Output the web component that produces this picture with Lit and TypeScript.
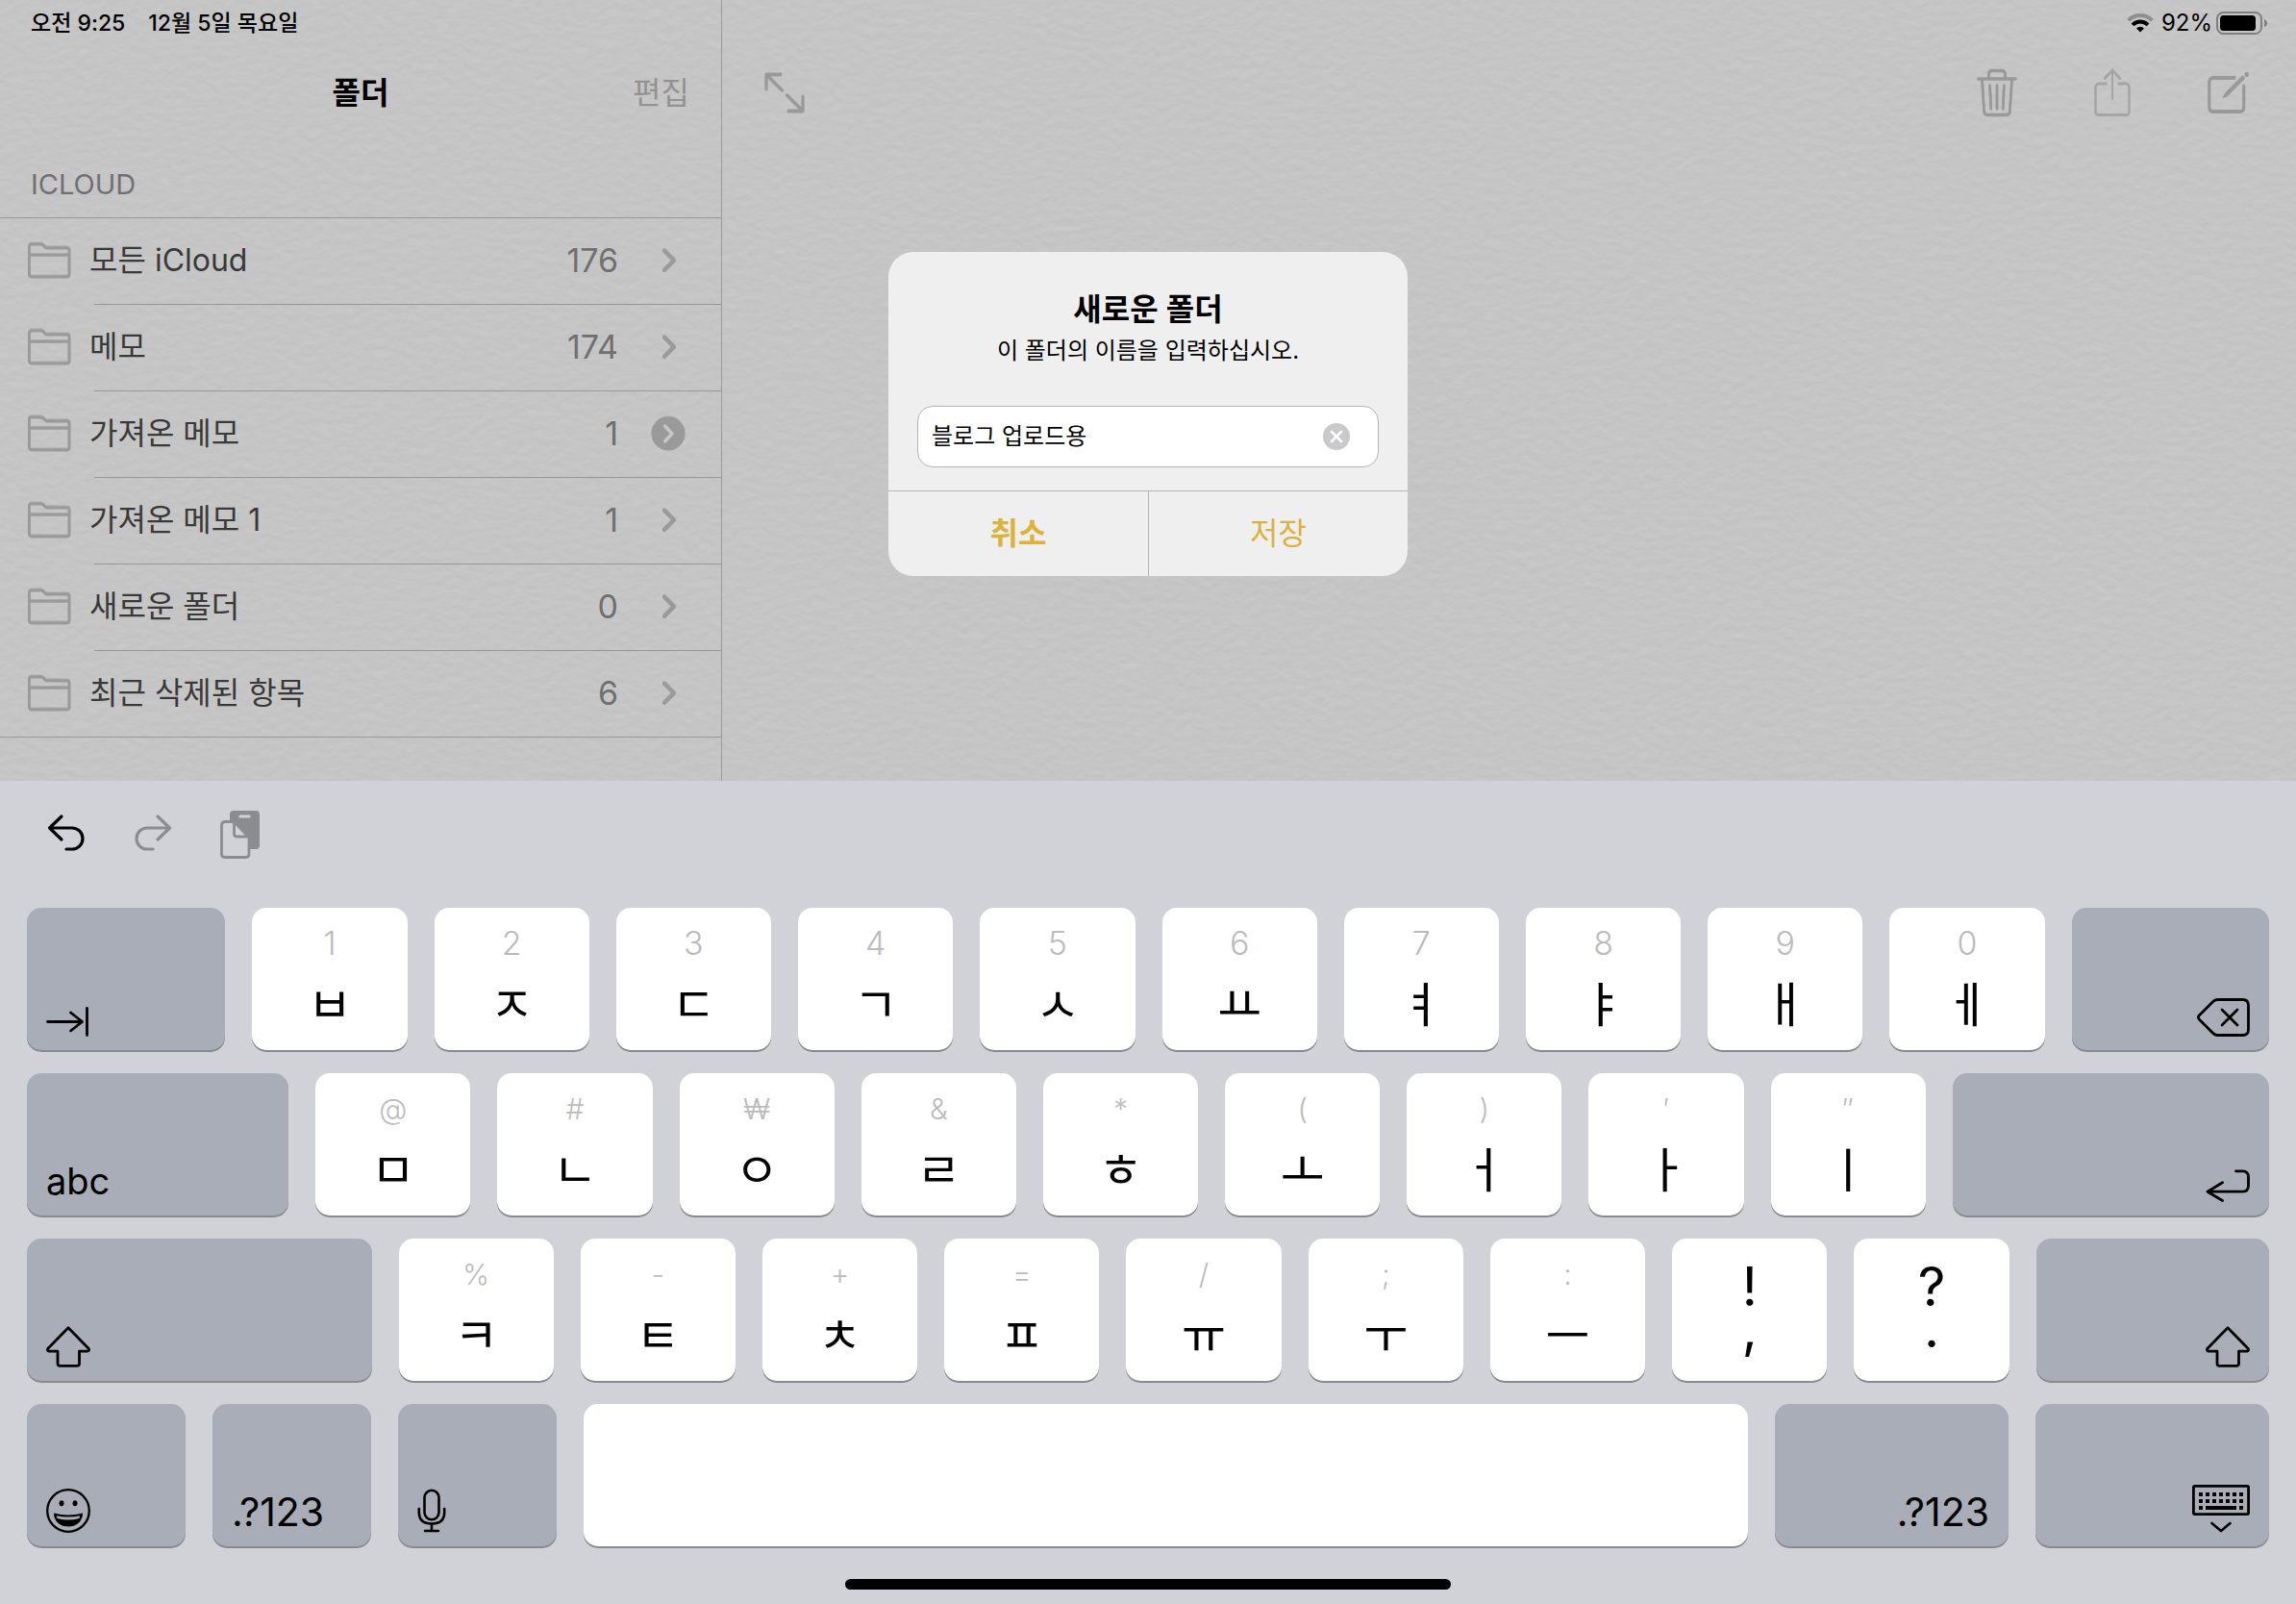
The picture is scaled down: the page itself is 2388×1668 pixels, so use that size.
import { LitElement, html, svg, css, nothing, type TemplateResult } from "lit";
import { customElement, property, state } from "lit/decorators.js";
import { classMap } from "lit/directives/class-map.js";
import { styleMap } from "lit/directives/style-map.js";

const icons: Record<string, TemplateResult> = {
  folder: html`<svg width="46" height="38" viewBox="0 0 46 38" fill="none" stroke="currentColor" stroke-width="2.8" stroke-linejoin="round" aria-hidden="true">
    <path d="M2.4 6V4.6Q2.4 2 5 2H14.5Q16 2 17 3.2L19 5.2Q19.8 6 21.2 6H41.4Q44 6 44 8.6V33.4Q44 36 41.4 36H5Q2.4 36 2.4 33.4Z"/><path d="M3 13.4H44"/></svg>`,
  chevron: html`<svg width="36" height="36" viewBox="0 0 36 36" fill="none" stroke="currentColor" stroke-width="4" stroke-linecap="round" stroke-linejoin="round" aria-hidden="true">
    <path d="M14 8L24 18L14 28"/></svg>`,
  chevronFilled: html`<svg width="36" height="36" viewBox="0 0 36 36" fill="none" aria-hidden="true">
    <circle cx="18" cy="18" r="17.5" fill="currentColor"/><path d="M14.5 10L22 18L14.5 26" stroke="#c6c6c6" stroke-width="3.4" stroke-linecap="round" stroke-linejoin="round"/></svg>`,
  expand: html`<svg width="42" height="42" viewBox="0 0 42 42" fill="none" stroke="currentColor" stroke-width="2.8" stroke-linecap="round" stroke-linejoin="round" aria-hidden="true">
    <path d="M2 17V2H17M2.500 2.500L18.500 18.500M40 25V40H25M39.500 39.500L23.500 23.500"/></svg>`,
  trash: html`<svg width="42" height="50" viewBox="0 0 42 50" fill="none" stroke="currentColor" stroke-width="2.6" stroke-linecap="round" stroke-linejoin="round" aria-hidden="true">
    <path d="M1.500 10.500H40.500M12.500 10V5.500Q12.500 2 16 2H26Q29.500 2 29.500 5.500V10M5.500 11L7.600 44.500Q7.900 48 11.400 48H30.600Q34.100 48 34.400 44.500L36.500 11M13.600 17.500L14.800 41.500M21 17.500V41.500M28.400 17.500L27.200 41.500"/></svg>`,
  share: html`<svg width="38" height="50" viewBox="0 0 38 50" fill="none" stroke="currentColor" stroke-width="2" stroke-linecap="round" stroke-linejoin="round" aria-hidden="true">
    <path d="M12.500 15.500H5Q1.500 15.500 1.500 19V44.500Q1.500 48 5 48H33Q36.500 48 36.500 44.500V19Q36.500 15.500 33 15.500H25.500"/><path d="M19 31V2M11 10L19 1.500L27 10"/></svg>`,
  compose: html`<svg width="44" height="44" viewBox="0 0 44 44" fill="none" aria-hidden="true">
    <path d="M28 6.500H6Q1.800 6.500 1.800 11V37Q1.800 41.500 6 41.500H33.500Q37.800 41.500 37.800 37V15" stroke="currentColor" stroke-width="2.800" stroke-linecap="round"/>
    <path d="M36.400 4.200L39 6.800L20.500 25.200L15.800 27.600L18 22.700Z" fill="currentColor"/><circle cx="40.700" cy="2.900" r="2.200" fill="currentColor"/></svg>`,
  wifi: html`<svg width="28" height="22" viewBox="0 0 28 22" fill="none" stroke-width="4" aria-hidden="true">
    <path d="M1.600 8.200A17.600 17.600 0 0 1 26.400 8.200" stroke="#000" stroke-opacity=".28"/><path d="M6 12.800A11.400 11.400 0 0 1 22 12.800" stroke="#000"/>
    <path d="M14 20.400L10 16.400A5.700 5.700 0 0 1 18 16.400Z" fill="#000"/></svg>`,
  battery: html`<svg width="53" height="24" viewBox="0 0 53 24" aria-hidden="true">
    <rect x="1" y="1" width="46" height="22" rx="6.500" fill="none" stroke="#7f7f7f" stroke-width="2"/><rect x="4" y="4" width="37" height="16" rx="3.500"/><path d="M50 8Q53 9 53 12Q53 15 50 16Z" fill="#7f7f7f"/></svg>`,
  clear: html`<svg width="28" height="28" viewBox="0 0 28 28" aria-hidden="true">
    <circle cx="14" cy="14" r="14" fill="#c9c9cb"/><path d="M9 9L19 19M19 9L9 19" stroke="#fff" stroke-width="2.800" stroke-linecap="round"/></svg>`,
  undo: html`<svg width="40" height="50" viewBox="0 -4 40 50" fill="none" stroke="currentColor" stroke-width="3.200" stroke-linecap="round" stroke-linejoin="round" aria-hidden="true">
    <path d="M15 2L2.500 14L15 26M3 14H26A10.800 10.800 0 0 1 26 36H20"/></svg>`,
  redo: html`<svg width="40" height="50" viewBox="0 -4 40 50" fill="none" stroke="currentColor" stroke-width="3.200" stroke-linecap="round" stroke-linejoin="round" aria-hidden="true">
    <path d="M25 2L37.500 14L25 26M37 14H14A10.800 10.800 0 0 0 14 36H20"/></svg>`,
  paste: html`<svg width="42" height="50" viewBox="0 0 42 50" aria-hidden="true">
    <path d="M10 11.500V4Q10 0 14 0H37Q41 0 41 4V36Q41 40 37 40H31V28L17 13Q15.500 11.500 13 11.500Z" fill="currentColor"/>
    <rect x="19.500" y="4.600" width="12" height="2.800" rx="1" fill="#d1d2d8"/>
    <path d="M15 11.500H5Q1.500 11.500 1.500 15V45Q1.500 48.500 5 48.500H26.500Q30 48.500 30 45V28L14.500 11.500V24Q14.500 27 17 27H30" fill="none" stroke="currentColor" stroke-width="2.800"/></svg>`,
  tab: html`<svg width="44" height="31" viewBox="0 0 44 31" fill="none" stroke="currentColor" stroke-width="2.800" stroke-linecap="round" stroke-linejoin="round" aria-hidden="true">
    <path d="M1.500 15.500H37.500M25.500 6L37.500 15.500L25.500 25M42.500 1.500V29.500"/></svg>`,
  del: html`<svg width="55" height="40" viewBox="0 0 55 40" fill="none" stroke="currentColor" stroke-width="2.800" stroke-linecap="round" stroke-linejoin="round" aria-hidden="true">
    <path d="M21 1.500H47.500Q53.500 1.500 53.500 7.500V32.500Q53.500 38.500 47.500 38.500H21Q18.500 38.500 16.500 36.300L2.500 22.300Q0.500 20 2.500 17.700L16.500 3.700Q18.500 1.500 21 1.500Z"/><path d="M26 12L42 28M42 12L26 28"/></svg>`,
  enter: html`<svg width="46" height="34" viewBox="0 0 46 34" fill="none" stroke="currentColor" stroke-width="2.800" stroke-linecap="round" stroke-linejoin="round" aria-hidden="true">
    <path d="M31.500 1.800H38.500Q44.500 1.800 44.500 8V17Q44.500 23.200 38.500 23.200H2M17.500 13.800L2 23.200L17.500 32.500"/></svg>`,
  shift: html`<svg width="46" height="43" viewBox="0 0 46 43" fill="none" stroke="currentColor" stroke-width="2.800" stroke-linejoin="round" aria-hidden="true">
    <path d="M23 1.800L44.300 23.600Q45 26 43 26.200H34.500V39Q34.500 41.400 32 41.400H14.500Q12 41.400 12 39V26.200H3Q1 26 1.700 23.600Z"/></svg>`,
  emoji: html`<svg width="46" height="46" viewBox="0 0 46 46" aria-hidden="true">
    <circle cx="23" cy="23" r="21.800" fill="none" stroke="currentColor" stroke-width="2.300"/><ellipse cx="16" cy="15.300" rx="2.500" ry="3"/><ellipse cx="30" cy="15.300" rx="2.500" ry="3"/>
    <path d="M8 25.600Q23 29.500 38 25.600Q38 32 33.500 36Q29 39.500 23 39.500Q17 39.500 12.500 36Q8 32 8 25.600Z"/><path d="M10.800 28.200Q23 31 35.200 28.200L34.400 31Q23 34 11.600 31Z" fill="#a9adb8"/></svg>`,
  mic: html`<svg width="30" height="46" viewBox="0 0 30 46" fill="none" stroke="currentColor" stroke-width="2.600" stroke-linecap="round" aria-hidden="true">
    <rect x="7.500" y="1.800" width="15" height="30.500" rx="7.500"/><path d="M1.800 21V24.500Q1.800 36.500 15 36.500Q28.200 36.500 28.200 24.500V21M15 37V44M8 44H22"/></svg>`,
  keyboard: html`<svg width="60" height="50" viewBox="0 0 60 50" fill="none" stroke="currentColor" aria-hidden="true">
    <rect x="1.400" y="1.400" width="57.200" height="29.200" rx="1.500" stroke-width="2.800"/><path d="M7 10H53M7 17H53" stroke-width="4" stroke-dasharray="4 3"/>
    <path d="M7 24H11M14 24H46M49 24H53" stroke-width="4"/><path d="M20.500 40L30 48L39.500 40" stroke-width="2.600" stroke-linecap="round" stroke-linejoin="round"/></svg>`,
};

type Tone = "char" | "mod" | "space" | "punct";

interface KeySpec {
  label: string;
  tone: Tone;
  width: number;
  hint?: string;
  icon?: string;
  text?: string;
  end?: boolean;
}

const chars = (labels: string, hints: string): KeySpec[] =>
  labels.split(" ").map((label, i) => ({ label, tone: "char", width: 161, hint: hints.split(" ")[i] }));

const mod = (label: string, width: number, extra: Partial<KeySpec>): KeySpec => ({ label, tone: "mod", width, ...extra });

const keyRows: KeySpec[][] = [
  [mod("탭", 206, { icon: "tab" }), ...chars("ㅂ ㅈ ㄷ ㄱ ㅅ ㅛ ㅕ ㅑ ㅐ ㅔ", "1 2 3 4 5 6 7 8 9 0"), mod("삭제", 205, { icon: "del", end: true })],
  [mod("abc", 272, { text: "abc" }), ...chars("ㅁ ㄴ ㅇ ㄹ ㅎ ㅗ ㅓ ㅏ ㅣ", "@ # ₩ & * ( ) ′ ″"), mod("입력", 329, { icon: "enter", end: true })],
  [
    mod("시프트", 358, { icon: "shift" }),
    ...chars("ㅋ ㅌ ㅊ ㅍ ㅠ ㅜ ㅡ", "% - + = / ; :"),
    { label: ",", tone: "punct", width: 161, hint: "!" },
    { label: ".", tone: "punct", width: 161, hint: "?" },
    mod("시프트", 242, { icon: "shift", end: true }),
  ],
  [
    mod("이모티콘", 165, { icon: "emoji" }),
    mod(".?123", 165, { text: ".?123" }),
    mod("받아쓰기", 165, { icon: "mic" }),
    { label: "스페이스", tone: "space", width: 1211 },
    mod(".?123", 243, { text: ".?123", end: true }),
    mod("키보드 가리기", 243, { icon: "keyboard", end: true }),
  ],
];

const reset = css`
  * { box-sizing: border-box; }
  button { appearance: none; border: 0; margin: 0; padding: 0; background: none; color: inherit; font: inherit; cursor: pointer; }
  svg { display: block; flex: none; }
`;

@customElement("folder-list")
export class FolderList extends LitElement {
  @property({ attribute: false }) folders: { name: string; count: number; filled?: boolean }[] = [];

  static styles = [reset, css`
    :host { display: block; }
    .list { list-style: none; margin: 0; padding: 0; border-top: 1px solid #979797; border-bottom: 1px solid #979797; }
    .item + .item::before { content: ""; display: block; height: 1px; margin-left: 98px; background: #979797; }
    .row { display: flex; align-items: center; width: 100%; height: 89px; padding: 0 37px 2px 28px; text-align: left; font-size: 32px; line-height: 40px; }
    .icon { color: #9a9a9a; filter: drop-shadow(0 -1px 0 rgba(0, 0, 0, 0.14)); }
    .name { flex: 1; margin-left: 19px; color: #393939; }
    .count { margin-right: 34px; color: #707070; font-size: 34px; }
  `];

  render() {
    return html`<ul class="list">
      ${this.folders.map((f) => html`<li class="item">
        <button class="row">
          <span class="icon">${icons.folder}</span>
          <span class="name">${f.name}</span>
          <span class="count">${f.count}</span>
          <span class="icon">${f.filled ? icons.chevronFilled : icons.chevron}</span>
        </button>
      </li>`)}
    </ul>`;
  }
}

@customElement("folder-dialog")
export class FolderDialog extends LitElement {
  @state() private value = "블로그 업로드용";

  static styles = [reset, css`
    :host { display: block; width: 540px; max-width: 100%; }
    .dialog { border-radius: 26px; background: #efefef; overflow: hidden; }
    .body { padding: 39px 30px 24px; text-align: center; }
    .title { margin: 0; font-size: 32px; line-height: 42px; font-weight: 600; }
    .message { display: block; font-size: 24px; line-height: 36px; margin-top: 4px; }
    .field { display: flex; align-items: center; height: 64px; margin-top: 39px; padding: 0 29px 0 14px; border: 1px solid #b4b4b6; border-radius: 16px; background: #fff; }
    .input { flex: 1; min-width: 0; border: 0; padding: 0; outline: 0; background: none; color: #000; font: inherit; font-size: 24px; line-height: 36px; }
    .actions { display: grid; grid-template-columns: 1fr 1fr; border-top: 1px solid #b4b4b4; }
    .action { height: 88px; color: #dcb23c; font-size: 32px; line-height: 42px; }
    .action + .action { border-left: 1px solid #b4b4b4; }
    .cancel { font-weight: 600; }
  `];

  render() {
    return html`<form class="dialog" role="dialog" aria-labelledby="title" @submit=${(e: Event) => e.preventDefault()}>
      <div class="body">
        <h2 class="title" id="title">새로운 폴더</h2>
        <label class="message" for="name">이 폴더의 이름을 입력하십시오.</label>
        <div class="field">
          <input class="input" id="name" type="text" .value=${this.value} @input=${(e: Event) => (this.value = (e.target as HTMLInputElement).value)} />
          <button type="button" aria-label="텍스트 지우기" @click=${() => (this.value = "")}>${icons.clear}</button>
        </div>
      </div>
      <div class="actions">
        <button type="button" class="action cancel">취소</button>
        <button type="submit" class="action">저장</button>
      </div>
    </form>`;
  }
}

@customElement("soft-keyboard")
export class SoftKeyboard extends LitElement {
  static styles = [reset, css`
    :host { display: block; background: #d1d2d8; padding: 0 28px 15px; }
    .tools { display: flex; align-items: center; gap: 50px; height: 112px; padding-left: 21px; }
    .tool:disabled { color: #8b8c90; }
    .rows { display: grid; gap: 24px; margin-top: 20px; padding-bottom: 34px; }
    .keys { display: grid; gap: 28px; }
    .key { height: 148px; border-radius: 15px; background: #fff; box-shadow: 0 2px 0 #898a8d; color: #000; }
    .char { display: flex; flex-direction: column; align-items: center; padding-top: 16px; }
    .hint { font-size: 30px; line-height: 42px; font-weight: 300; color: #bbb; }
    .digit { font-size: 34px; }
    .jamo { font-size: 50px; line-height: 78px; font-family: "Noto Sans CJK KR", sans-serif; }
    .punct { display: flex; align-items: flex-start; justify-content: center; padding-top: 29px; font-size: 56px; line-height: 43px; white-space: pre; text-align: center; }
    .mod { display: flex; align-items: flex-end; padding: 0 20px 14px; background: #a9adb8; font-size: 38px; line-height: 44px; }
    .numeric { font-size: 41px; }
    .end { justify-content: flex-end; }
    .home { width: 27%; height: 11px; margin: 0 auto; border-radius: 6px; background: #000; }
  `];

  private face(k: KeySpec) {
    switch (k.tone) {
      case "char":
        return html`<span class=${classMap({ hint: true, digit: /\d/.test(k.hint ?? "") })}>${k.hint}</span><span class="jamo">${k.label}</span>`;
      case "punct":
        return html`<span>${`${k.hint}\n${k.label}`}</span>`;
      case "mod":
        return k.icon ? icons[k.icon] : html`<span class=${classMap({ numeric: /\d/.test(k.text ?? "") })}>${k.text}</span>`;
      default:
        return nothing;
    }
  }

  render() {
    return html`
      <div class="tools">
        <button class="tool" aria-label="실행 취소">${icons.undo}</button>
        <button class="tool" aria-label="실행 복귀" disabled>${icons.redo}</button>
        <button class="tool" aria-label="붙여넣기" disabled>${icons.paste}</button>
      </div>
      <div class="rows">
        ${keyRows.map((row) => html`<div class="keys" style=${styleMap({ gridTemplateColumns: row.map((k) => `minmax(0, ${k.width}fr)`).join(" ") })}>
          ${row.map((k) => html`<button class=${classMap({ key: true, [k.tone]: true, end: !!k.end })} aria-label=${k.label}>${this.face(k)}</button>`)}
        </div>`)}
      </div>
      <div class="home"></div>`;
  }
}

@customElement("app-root")
export class AppRoot extends LitElement {
  private folders = [
    { name: "모든 iCloud", count: 176 },
    { name: "메모", count: 174 },
    { name: "가져온 메모", count: 1, filled: true },
    { name: "가져온 메모 1", count: 1 },
    { name: "새로운 폴더", count: 0 },
    { name: "최근 삭제된 항목", count: 6 },
  ];

  static styles = [reset, css`
    :host { display: flex; flex-direction: column; min-height: 100vh; background: #c5c5c5; color: #000; font-family: Inter, "Noto Sans CJK KR", sans-serif; }
    .app { position: relative; flex: 1; display: grid; grid-template-columns: minmax(0, 750fr) minmax(0, 1638fr); isolation: isolate; }
    .paper { position: absolute; inset: 0; width: 100%; height: 100%; z-index: -1; }
    .sidebar { border-right: 1px solid #999; margin-right: -1px; }
    .status { display: flex; align-items: center; height: 46px; padding: 2px 30px 0 32px; font-size: 23px; line-height: 30px; font-weight: 500; }
    .date { margin-left: 24px; }
    .right { justify-content: flex-end; font-size: 24px; font-weight: 400; gap: 4px; }
    .wifi { margin-right: 4px; }
    .nav { display: grid; grid-template-columns: 1fr auto 1fr; align-items: center; height: 102px; padding: 0 33px; font-size: 32px; line-height: 42px; }
    .title { grid-column: 2; margin: 0; font-size: 32px; font-weight: 700; }
    .edit { justify-self: end; color: #929292; }
    .section { margin: 0; padding: 26px 32px 16px; font-size: 29px; line-height: 36px; font-weight: 400; color: #707074; }
    .toolbar { display: flex; align-items: center; gap: 80px; height: 102px; padding: 0 48px 0 45px; color: #999; }
    .press { filter: drop-shadow(0 -1px 0 rgba(0, 0, 0, 0.22)); }
    .spacer { flex: 1; }
    .faint { opacity: 0.75; }
    .stamp { margin: -34px 0 0; text-align: center; font-size: 28px; line-height: 34px; color: rgba(0, 0, 0, 0.02); }
    .overlay { position: absolute; inset: 0; display: flex; align-items: center; justify-content: center; padding-top: 49px; }
  `];

  private paper() {
    return html`<svg class="paper" aria-hidden="true">
      ${svg`<filter id="grain" x="0" y="0" width="100%" height="100%" color-interpolation-filters="sRGB">
        <feTurbulence type="fractalNoise" baseFrequency="0.09 0.13" numOctaves="2" seed="4" result="n"/>
        <feDiffuseLighting in="n" surfaceScale="0.16" diffuseConstant="1.09" lighting-color="#c6c6c6">
          <feDistantLight azimuth="270" elevation="66"/>
        </feDiffuseLighting>
      </filter><rect width="100%" height="100%" filter="url(#grain)"/>`}
    </svg>`;
  }

  render() {
    return html`
      <main class="app">
        ${this.paper()}
        <section class="sidebar">
          <div class="status"><span>오전 9:25</span><span class="date">12월 5일 목요일</span></div>
          <header class="nav"><h1 class="title">폴더</h1><button class="edit">편집</button></header>
          <h2 class="section">ICLOUD</h2>
          <folder-list .folders=${this.folders}></folder-list>
        </section>
        <section class="note">
          <div class="status right"><span class="wifi">${icons.wifi}</span><span>92%</span>${icons.battery}</div>
          <div class="toolbar">
            <button class="press" aria-label="전체 화면">${icons.expand}</button>
            <span class="spacer"></span>
            <button class="press" aria-label="삭제">${icons.trash}</button>
            <button class="press faint" aria-label="공유">${icons.share}</button>
            <button class="press" aria-label="새로운 메모">${icons.compose}</button>
          </div>
          <p class="stamp">2019년 11월 17일 오후 12:26</p>
        </section>
        <div class="overlay"><folder-dialog></folder-dialog></div>
      </main>
      <soft-keyboard></soft-keyboard>`;
  }
}
